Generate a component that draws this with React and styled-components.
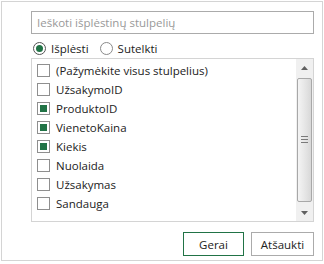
import React from "react";
import styled, { createGlobalStyle } from "styled-components";

const Global = createGlobalStyle`
  body {
    margin: 0;
    background: #ffffff;
    font-family: "Open Sans", "Noto Sans", sans-serif;
  }
`;

const Frame = styled.div`
  box-sizing: border-box;
  margin: 1px;
  width: 322px;
  height: 260px;
  border: 1px solid #d4d4d4;
  padding: 9px 8px 0 29px;
  display: flex;
  flex-direction: column;
`;

const Search = styled.input`
  box-sizing: border-box;
  width: 283px;
  height: 23px;
  border: 1px solid #ababab;
  padding: 0 5px;
  font-family: inherit;
  font-size: 11.5px;
  color: #333;
  outline: none;
  &::placeholder {
    color: #999;
  }
`;

const RadioRow = styled.div`
  display: flex;
  align-items: center;
  height: 14px;
  margin-top: 7px;
  padding-left: 2px;
`;

const RadioLabel = styled.label`
  display: flex;
  align-items: center;
  font-size: 11.5px;
  color: #222;
  margin-right: 11px;
`;

const Circle = styled.span`
  box-sizing: border-box;
  width: 13px;
  height: 13px;
  border-radius: 50%;
  border: 1px solid ${(p) => (p.$on ? "#555" : "#8a8a8a")};
  display: flex;
  align-items: center;
  justify-content: center;
  margin-right: 5px;
  &::after {
    content: "";
    width: 7px;
    height: 7px;
    border-radius: 50%;
    background: ${(p) => (p.$on ? "#217346" : "transparent")};
  }
`;

const ListBox = styled.div`
  box-sizing: border-box;
  margin-top: 3px;
  width: 283px;
  height: 164px;
  border: 1px solid #d4d4d4;
  display: flex;
`;

const Items = styled.div`
  flex: 1;
  padding: 2px 0 0 5px;
  display: flex;
  flex-direction: column;
`;

const Item = styled.div`
  display: flex;
  align-items: center;
  height: 19px;
  font-size: 11.5px;
  color: #222;
`;

const Box = styled.span`
  box-sizing: border-box;
  width: 13px;
  height: 13px;
  border: 1px solid #8f8f8f;
  margin-right: 6px;
  padding: 2px;
  &::after {
    content: "";
    display: block;
    width: 100%;
    height: 100%;
    background: ${(p) => (p.$on ? "#217346" : "transparent")};
  }
`;

const Scroll = styled.div`
  width: 17px;
  display: flex;
  flex-direction: column;
  align-items: center;
  background: #f0f0f0;
`;

const Arrow = styled.div`
  height: 17px;
  width: 17px;
  display: flex;
  align-items: center;
  justify-content: center;
`;

const Thumb = styled.div`
  box-sizing: border-box;
  flex: 1;
  width: 15px;
  margin: 2px 0;
  border: 1px solid #a8a8a8;
  border-radius: 2px;
  background: linear-gradient(to right, #f4f4f4, #e4e4e4 60%, #d8d8d8);
  display: flex;
  align-items: center;
  justify-content: center;
`;

const Buttons = styled.div`
  display: flex;
  justify-content: flex-end;
  gap: 7px;
  margin-top: 10px;
  width: 283px;
`;

const Button = styled.button`
  box-sizing: border-box;
  height: 24px;
  width: ${(p) => p.$w}px;
  background: #fff;
  border: 1px solid ${(p) => (p.$primary ? "#217346" : "#ababab")};
  font-family: inherit;
  font-size: 11.5px;
  color: #222;
  padding: 0;
`;

const items = [
  ["(Pažymėkite visus stulpelius)", false],
  ["UžsakymoID", false],
  ["ProduktoID", true],
  ["VienetoKaina", true],
  ["Kiekis", true],
  ["Nuolaida", false],
  ["Užsakymas", false],
  ["Sandauga", false],
];

export default function App() {
  return (
    <>
      <Global />
      <Frame>
        <Search placeholder="Ieškoti išplėstinų stulpelių" />
        <RadioRow>
          <RadioLabel>
            <Circle $on />
            Išplėsti
          </RadioLabel>
          <RadioLabel>
            <Circle />
            Sutelkti
          </RadioLabel>
        </RadioRow>
        <ListBox>
          <Items>
            {items.map(([t, on]) => (
              <Item key={t}>
                <Box $on={on} />
                {t}
              </Item>
            ))}
          </Items>
          <Scroll>
            <Arrow>
              <svg width="7" height="4" viewBox="0 0 7 4">
                <path d="M0 4 L3.5 0 L7 4 Z" fill="#606060" />
              </svg>
            </Arrow>
            <Thumb>
              <svg width="7" height="9" viewBox="0 0 7 9">
                <path d="M0 0.5 H7 M0 3.5 H7 M0 6.5 H7" stroke="#7a7a7a" strokeWidth="1" />
              </svg>
            </Thumb>
            <Arrow>
              <svg width="7" height="4" viewBox="0 0 7 4">
                <path d="M0 0 L3.5 4 L7 0 Z" fill="#606060" />
              </svg>
            </Arrow>
          </Scroll>
        </ListBox>
        <Buttons>
          <Button $primary $w={61}>Gerai</Button>
          <Button $w={63}>Atšaukti</Button>
        </Buttons>
      </Frame>
    </>
  );
}
